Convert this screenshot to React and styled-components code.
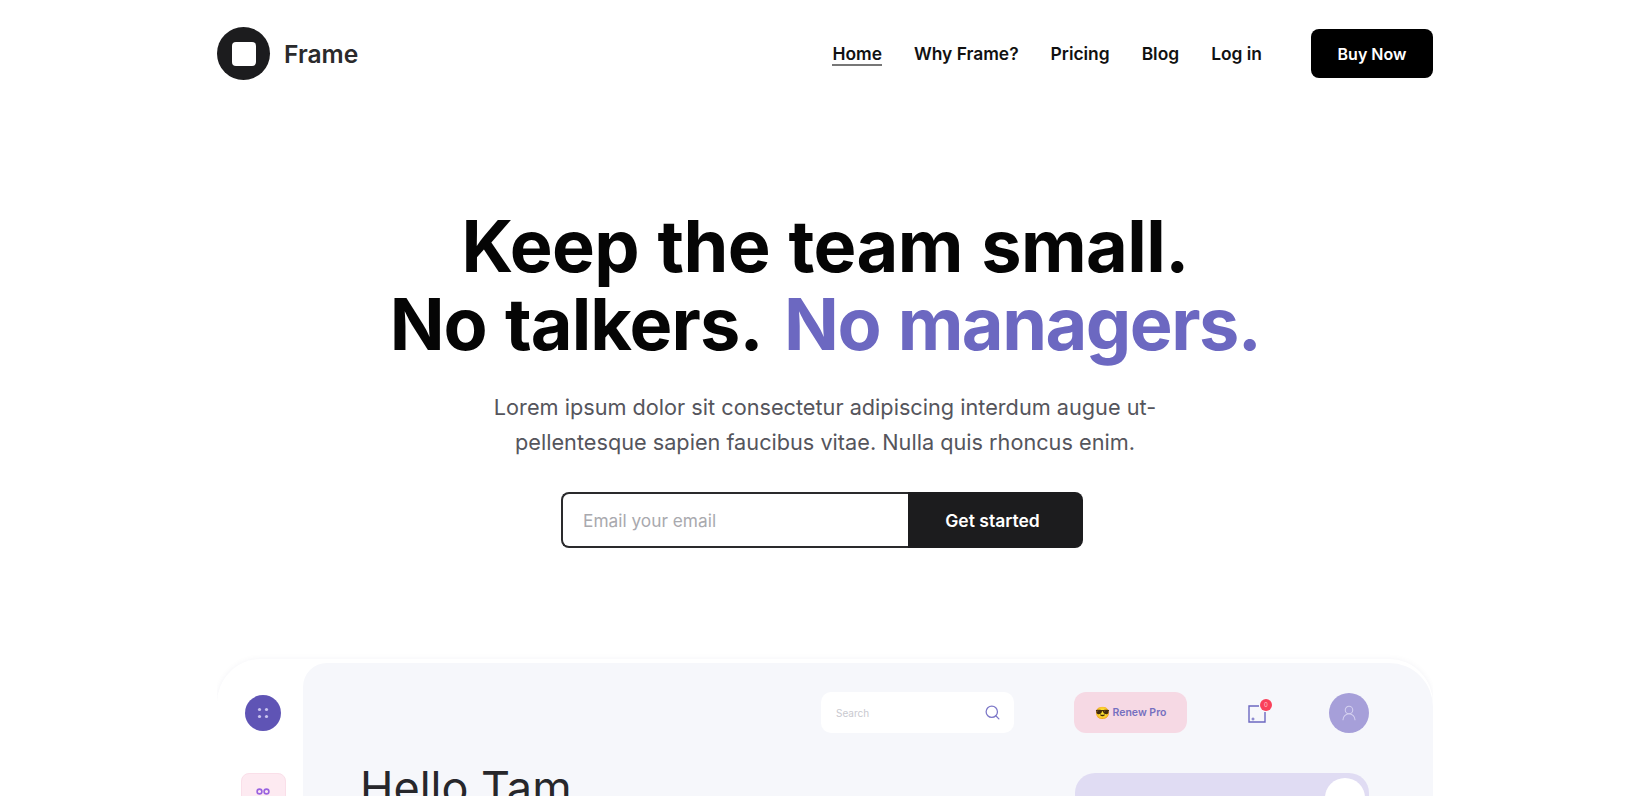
import React from 'react';
import styled, { createGlobalStyle } from 'styled-components';
import { Search, UserRound } from 'lucide-react';

const GlobalStyle = createGlobalStyle`
  html, body {
    margin: 0;
    height: 100%;
    overflow: hidden;
    background: #fff;
    font-family: Inter, "Liberation Sans", sans-serif;
  }
`;

const Page = styled.div`
  width: 1216px;
  height: 796px;
  margin-left: 217px;
  overflow: hidden;
`;

const Header = styled.header`
  height: 107px;
  margin-bottom: 1px;
  display: flex;
  align-items: center;
  justify-content: space-between;
`;

const Brand = styled.div`
  display: flex;
  align-items: center;
  gap: 14px;
`;

const LogoMark = styled.div`
  width: 53px;
  height: 53px;
  border-radius: 50%;
  background: #1c1c1e;
  display: flex;
  align-items: center;
  justify-content: center;
  &::after {
    content: '';
    width: 24px;
    height: 24px;
    border-radius: 4px;
    background: #fff;
  }
`;

const BrandName = styled.span`
  font-size: 24.6px;
  font-weight: 600;
  color: #2a2a2c;
`;

const Nav = styled.nav`
  display: flex;
  align-items: center;
`;

const NavLink = styled.a`
  font-size: 17.4px;
  line-height: 20px;
  font-weight: 600;
  color: #111;
  margin: 3px 32px 0 0;
  border-bottom: 2px solid ${({ $active }) => ($active ? '#777' : 'transparent')};
`;

const BuyButton = styled.button`
  width: 122px;
  height: 49px;
  margin-left: 17px;
  border: 0;
  border-radius: 8px;
  background: #000;
  color: #fff;
  font: 600 16px Inter, sans-serif;
`;

const Hero = styled.section`
  display: flex;
  flex-direction: column;
  align-items: center;
  padding-top: 99px;
`;

const Title = styled.h1`
  margin: 0;
  font-size: 72px;
  line-height: 78px;
  font-weight: 700;
  text-align: center;
  word-spacing: 2px;
  letter-spacing: -0.6px;
  color: #050505;
`;

const Talkers = styled.span`
  letter-spacing: -0.9px;
`;

const Accent = styled.span`
  margin-left: 3px;
  letter-spacing: -1.5px;
  color: #6c68c1;
`;

const Lead = styled.p`
  margin: 27px 0 0;
  font-size: 21.7px;
  line-height: 35px;
  text-align: center;
  color: #55555c;
`;

const SignupForm = styled.form`
  display: flex;
  width: 522px;
  height: 56px;
  margin: 32px 6px 0 0;
`;

const EmailInput = styled.input`
  flex: 1;
  min-width: 0;
  box-sizing: border-box;
  padding: 0 20px;
  border: 2px solid #2a2a2c;
  border-right: 0;
  border-radius: 8px 0 0 8px;
  font: 400 17.3px Inter, sans-serif;
  outline: none;
  &::placeholder {
    color: #a9a9ae;
  }
`;

const SubmitButton = styled.button`
  width: 175px;
  border: 0;
  padding: 0 6px 0 0;
  border-radius: 0 8px 8px 0;
  background: #1c1c1e;
  color: #fff;
  font: 600 17.5px Inter, sans-serif;
`;

const Dashboard = styled.section`
  display: flex;
  height: 300px;
  box-sizing: border-box;
  padding-top: 4px;
  margin-top: 111px;
  border-radius: 44px 44px 0 0;
  box-shadow: 0 0 6px rgba(40, 40, 90, 0.05);
  background: #fff;
`;

const Rail = styled.aside`
  width: 86px;
  flex: none;
  display: flex;
  flex-direction: column;
  align-items: center;
  padding: 32px 0 0 6px;
  box-sizing: border-box;
  gap: 42px;
`;

const MenuDot = styled.div`
  width: 36px;
  height: 36px;
  border-radius: 50%;
  background: #5f54b5;
  display: grid;
  place-items: center;
`;

const RailTile = styled.div`
  width: 45px;
  height: 45px;
  border-radius: 8px;
  border: 1px solid #fadfe9;
  background: #fdeaf1;
  display: flex;
  justify-content: center;
  padding-top: 14px;
  box-sizing: border-box;
`;

const Panel = styled.div`
  flex: 1;
  background: #f6f7fb;
  border-radius: 24px 44px 0 0;
  padding: 29px 64px 0 57px;
  display: flex;
  flex-direction: column;
`;

const TopBar = styled.div`
  display: flex;
  align-items: center;
  justify-content: flex-end;
  height: 41px;
`;

const SearchBox = styled.div`
  width: 193px;
  height: 41px;
  box-sizing: border-box;
  padding: 0 13px 0 15px;
  border-radius: 10px;
  background: #fff;
  display: flex;
  align-items: center;
  justify-content: space-between;
  font-size: 10px;
  color: #c9c9cf;
  margin-right: 60px;
`;

const RenewButton = styled.div`
  width: 113px;
  height: 41px;
  border-radius: 12px;
  background: #f6d9e4;
  display: flex;
  align-items: center;
  justify-content: center;
  gap: 3px;
  font-size: 10.5px;
  font-weight: 600;
  color: #7570c0;
`;

const Emoji = styled.span`
  font-size: 12px;
`;

const Bell = styled.div`
  position: relative;
  width: 18px;
  height: 18px;
  margin: 3px 0 0 61px;
`;

const Badge = styled.span`
  position: absolute;
  top: -6px;
  right: -6px;
  width: 12px;
  height: 12px;
  border-radius: 50%;
  background: #f9405a;
  color: #ffc9d2;
  font-size: 6px;
  line-height: 12px;
  text-align: center;
`;

const Avatar = styled.div`
  width: 40px;
  height: 40px;
  margin-left: 63px;
  border-radius: 50%;
  background: #a69fd9;
  display: grid;
  place-items: center;
`;

const Columns = styled.div`
  display: flex;
  align-items: flex-start;
  justify-content: space-between;
  margin-top: 25px;
`;

const Greeting = styled.h2`
  margin: 6px 0 0;
  font-size: 45px;
  line-height: 48px;
  font-weight: 400;
  color: #27272b;
`;

const PlanCard = styled.div`
  width: 294px;
  height: 120px;
  margin-top: 15px;
  box-sizing: border-box;
  padding: 5px 4px;
  border-radius: 20px;
  background: #e0dcf3;
  display: flex;
  justify-content: flex-end;
  &::after {
    content: '';
    width: 40px;
    height: 40px;
    border-radius: 50%;
    background: #fff;
  }
`;

const App = () => (
  <>
    <GlobalStyle />
    <Page>
      <Header>
        <Brand>
          <LogoMark />
          <BrandName>Frame</BrandName>
        </Brand>
        <Nav>
          <NavLink $active>Home</NavLink>
          <NavLink>Why Frame?</NavLink>
          <NavLink>Pricing</NavLink>
          <NavLink>Blog</NavLink>
          <NavLink>Log in</NavLink>
          <BuyButton>Buy Now</BuyButton>
        </Nav>
      </Header>
      <Hero>
        <Title>
          Keep the team small.
          <br />
          <Talkers>No talkers.</Talkers> <Accent>No managers.</Accent>
        </Title>
        <Lead>
          Lorem ipsum dolor sit consectetur adipiscing interdum augue ut-
          <br />
          pellentesque sapien faucibus vitae. Nulla quis rhoncus enim.
        </Lead>
        <SignupForm>
          <EmailInput placeholder="Email your email" />
          <SubmitButton type="button">Get started</SubmitButton>
        </SignupForm>
      </Hero>
      <Dashboard>
        <Rail>
          <MenuDot>
            <svg width="14" height="14" viewBox="0 0 14 14" fill="#c9c4ee">
              <circle cx="3.5" cy="3.5" r="1.6" />
              <circle cx="10.5" cy="3.5" r="1.6" />
              <circle cx="3.5" cy="10.5" r="1.6" />
              <circle cx="10.5" cy="10.5" r="1.6" />
            </svg>
          </MenuDot>
          <RailTile>
            <svg width="14" height="7" viewBox="0 0 14 7" fill="none" stroke="#9a63e0" strokeWidth="1.6">
              <circle cx="3.5" cy="3.5" r="2.4" />
              <circle cx="10.5" cy="3.5" r="2.4" />
            </svg>
          </RailTile>
        </Rail>
        <Panel>
          <TopBar>
            <SearchBox>
              Search
              <Search size={17} color="#7d78c8" strokeWidth={1.8} />
            </SearchBox>
            <RenewButton>
              <Emoji>😎</Emoji> Renew Pro
            </RenewButton>
            <Bell>
              <svg width="18" height="18" viewBox="0 0 18 18" fill="none" stroke="#6c68c1" strokeWidth="1.4">
                <path d="M11 1H1v16h16V7" />
                <path d="M3.5 14h3M5 12.5v3" strokeWidth="1" />
              </svg>
              <Badge>0</Badge>
            </Bell>
            <Avatar>
              <UserRound size={18} color="#d5d1f0" strokeWidth={1.4} />
            </Avatar>
          </TopBar>
          <Columns>
            <Greeting>Hello Tam</Greeting>
            <PlanCard />
          </Columns>
        </Panel>
      </Dashboard>
    </Page>
  </>
);

export default App;
